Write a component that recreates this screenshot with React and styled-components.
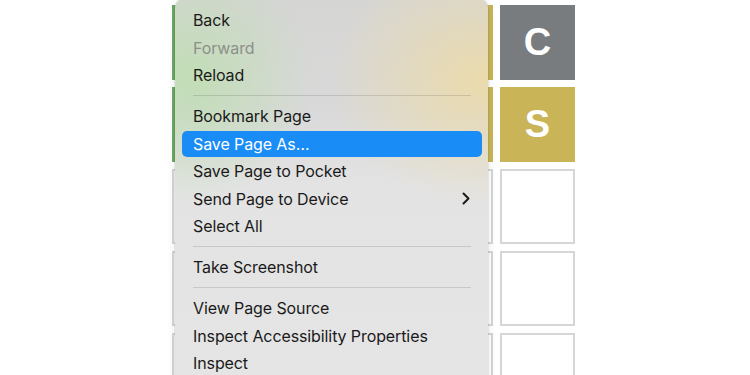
import React from 'react'
import styled, { createGlobalStyle } from 'styled-components'

const GlobalStyle = createGlobalStyle`
  html, body {
    margin: 0;
    padding: 0;
    background: #ffffff;
    overflow: hidden;
  }
  body {
    width: 750px;
    height: 375px;
    font-family: Inter, "Liberation Sans", sans-serif;
  }
`

const COLORS = {
  correct: '#6aaa64',
  present: '#c9b458',
  absent: '#787c7e',
}

// letters under the menu are hidden, so only the visible column carries one
const rows = [
  [['', 'correct'], ['', 'absent'], ['', 'absent'], ['', 'present'], ['C', 'absent']],
  [['', 'correct'], ['', 'absent'], ['', 'absent'], ['', 'present'], ['S', 'present']],
  [null, null, null, null, null],
  [null, null, null, null, null],
  [null, null, null, null, null],
]

const menu = [
  { label: 'Back' },
  { label: 'Forward', disabled: true },
  { label: 'Reload' },
  { sep: true },
  { label: 'Bookmark Page' },
  { label: 'Save Page As…', active: true },
  { label: 'Save Page to Pocket' },
  { label: 'Send Page to Device', sub: true },
  { label: 'Select All' },
  { sep: true },
  { label: 'Take Screenshot' },
  { sep: true },
  { label: 'View Page Source' },
  { label: 'Inspect Accessibility Properties' },
  { label: 'Inspect' },
]

//-----*-----*-----*-----*-----*-----//

const App = () => {
  return (
    <>
      <GlobalStyle />
      <Page>
        <Board>
          {rows.map((row, r) =>
            row.map((cell, c) => (
              <Tile key={`${r}-${c}`} $state={cell ? cell[1] : null}>
                {cell ? cell[0] : ''}
              </Tile>
            ))
          )}
        </Board>
        <Menu>
          {menu.map((item, i) =>
            item.sep ? (
              <Separator key={i} />
            ) : (
              <Item key={i} $active={item.active} $disabled={item.disabled}>
                <span>{item.label}</span>
                {item.sub && (
                  <svg width="8" height="13" viewBox="0 0 8 13">
                    <polyline
                      points="1.5,1.5 6.5,6.5 1.5,11.5"
                      fill="none"
                      stroke="currentColor"
                      strokeWidth="2"
                      strokeLinecap="round"
                      strokeLinejoin="round"
                    />
                  </svg>
                )}
              </Item>
            )
          )}
        </Menu>
      </Page>
    </>
  )
}

const Page = styled.div`
  position: relative;
  width: 750px;
  height: 375px;
  display: flex;
  justify-content: center;
  padding: 5px 3px 0 0;
  box-sizing: border-box;
  overflow: hidden;
`

const Board = styled.div`
  display: grid;
  grid-template-columns: repeat(5, 75px);
  grid-auto-rows: 75px;
  gap: 7px;
  align-content: start;
`

const Tile = styled.div`
  box-sizing: border-box;
  display: flex;
  align-items: center;
  justify-content: center;
  font-family: "Liberation Sans", Arial, sans-serif;
  font-weight: bold;
  font-size: 38px;
  color: #ffffff;
  background: ${(p) => (p.$state ? COLORS[p.$state] : '#ffffff')};
  border: 2px solid ${(p) => (p.$state ? COLORS[p.$state] : '#d5d6d8')};
`

/* opaque vibrancy look: the blurred tiles are painted as soft gradients */
const Menu = styled.div`
  position: absolute;
  left: 175px;
  top: -1px;
  width: 313px;
  height: 400px;
  box-sizing: border-box;
  padding: 8px 6px 0 7px;
  display: flex;
  flex-direction: column;
  gap: 1.5px;
  border-radius: 9px;
  background:
    radial-gradient(ellipse 125px 125px at 15px 80px, rgba(192, 222, 180, 0.95), rgba(192, 222, 180, 0) 100%),
    radial-gradient(ellipse 150px 125px at 305px 80px, rgba(236, 219, 170, 0.95), rgba(236, 219, 170, 0) 100%),
    linear-gradient(180deg, #d5d5d4 0px, #d9d9d9 110px, #e3e3e3 185px, #e5e5e5 100%);
  box-shadow: 0 0 10px rgba(0, 0, 0, 0.1), 0 0 0 0.5px rgba(0, 0, 0, 0.12);
`

const Item = styled.div`
  height: 26px;
  flex: none;
  display: flex;
  align-items: center;
  justify-content: space-between;
  padding: 0 12px 0 11px;
  border-radius: 5px;
  font-size: 16px;
  letter-spacing: -0.1px;
  color: ${(p) => (p.$active ? '#ffffff' : p.$disabled ? '#8d8f8c' : '#1a1a1a')};
  background: ${(p) => (p.$active ? '#1a8cf6' : 'transparent')};
`

const Separator = styled.div`
  height: 12px;
  flex: none;
  display: flex;
  align-items: center;
  padding: 0 11px;
  &::after {
    content: '';
    flex: 1;
    height: 1px;
    background: rgba(0, 0, 0, 0.12);
  }
`

export default App
